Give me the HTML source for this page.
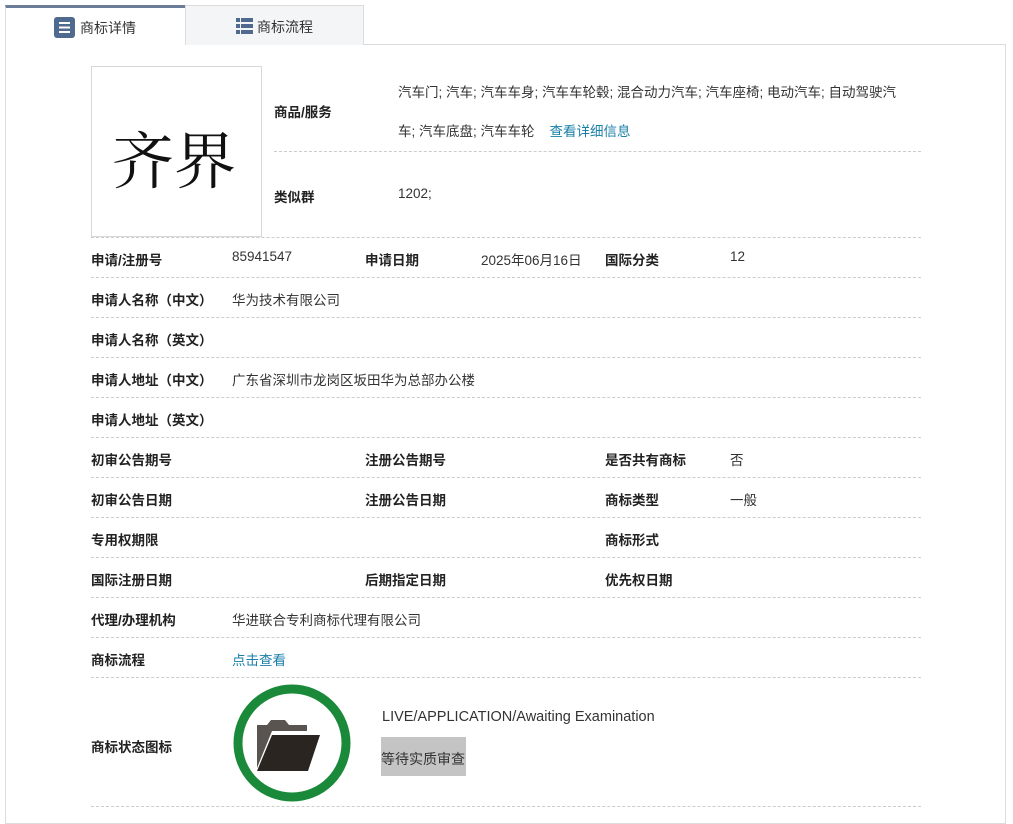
<!DOCTYPE html>
<html><head><meta charset="utf-8"><style>
*{margin:0;padding:0;box-sizing:border-box}
body{width:1013px;height:810px;background:#fff;font-family:"Liberation Sans","Noto Sans CJK SC",sans-serif;font-size:13.5px;color:#333;position:relative;overflow:hidden}
.a{position:absolute;white-space:nowrap}
.b{font-weight:bold;color:#222}
.l{position:absolute;left:91px;width:830px;border-top:1px dashed #ccc}
.lk{color:#1a7fa8}
</style></head><body>
<div class="a" style="left:5px;top:44px;width:1001px;height:780px;border:1px solid #dcdcdc"></div>
<div class="a" style="left:185px;top:5px;width:179px;height:40px;background:#f4f5f7;border:1px solid #dcdcdc;border-bottom:none"></div>
<div class="a" style="left:5px;top:5px;width:180px;height:41px;background:#fff;border-top:3px solid #6b7c99;border-left:1px solid #dcdcdc"></div>
<svg class="a" style="left:54px;top:17px" width="21" height="21"><rect width="21" height="21" rx="3" fill="#4e6a8e"/><rect x="5" y="5" width="11" height="2" fill="#fff"/><rect x="5" y="9.5" width="11" height="2" fill="#fff"/><rect x="5" y="14" width="11" height="2" fill="#fff"/></svg>
<div class="a" style="left:80px;top:18px;font-size:14px">商标详情</div>
<svg class="a" style="left:236px;top:18px" width="17" height="17"><g fill="#4e6a8e"><rect width="4" height="4"/><rect x="5" width="12" height="4"/><rect y="6" width="4" height="4"/><rect x="5" y="6" width="12" height="4"/><rect y="12" width="4" height="4"/><rect x="5" y="12" width="12" height="4"/></g></svg>
<div class="a" style="left:257px;top:17px;font-size:14px">商标流程</div>

<div class="a" style="left:91px;top:66px;width:171px;height:171px;border:1px solid #d8d8d8"></div>
<div class="a" style="left:112px;top:112px;font-family:'Noto Serif CJK SC',serif;font-size:62px;color:#111">齐界</div>
<div class="a b" style="left:274px;top:101px">商品/服务</div>
<div class="a" style="left:398px;top:81px">汽车门; 汽车; 汽车车身; 汽车车轮毂; 混合动力汽车; 汽车座椅; 电动汽车; 自动驾驶汽</div>
<div class="a" style="left:398px;top:120px">车; 汽车底盘; 汽车车轮 &nbsp;&nbsp;&nbsp;<span class="lk">查看详细信息</span></div>
<div class="a" style="left:274px;top:151px;width:647px;border-top:1px dashed #ccc"></div>
<div class="a b" style="left:274px;top:186px">类似群</div>
<div class="a" style="left:398px;top:186px">1202;</div>
<div class="l" style="top:237px"></div>

<div class="a b" style="left:91px;top:249px">申请/注册号</div><div class="a" style="left:232px;top:249px">85941547</div><div class="a b" style="left:365px;top:249px">申请日期</div><div class="a" style="left:481px;top:249px">2025年06月16日</div><div class="a b" style="left:605px;top:249px">国际分类</div><div class="a" style="left:730px;top:249px">12</div>
<div class="l" style="top:277px"></div>
<div class="a b" style="left:91px;top:289px">申请人名称（中文）</div><div class="a" style="left:232px;top:289px">华为技术有限公司</div>
<div class="l" style="top:317px"></div>
<div class="a b" style="left:91px;top:329px">申请人名称（英文）</div>
<div class="l" style="top:357px"></div>
<div class="a b" style="left:91px;top:369px">申请人地址（中文）</div><div class="a" style="left:232px;top:369px">广东省深圳市龙岗区坂田华为总部办公楼</div>
<div class="l" style="top:397px"></div>
<div class="a b" style="left:91px;top:409px">申请人地址（英文）</div>
<div class="l" style="top:437px"></div>
<div class="a b" style="left:91px;top:449px">初审公告期号</div><div class="a b" style="left:365px;top:449px">注册公告期号</div><div class="a b" style="left:605px;top:449px">是否共有商标</div><div class="a" style="left:730px;top:449px">否</div>
<div class="l" style="top:477px"></div>
<div class="a b" style="left:91px;top:489px">初审公告日期</div><div class="a b" style="left:365px;top:489px">注册公告日期</div><div class="a b" style="left:605px;top:489px">商标类型</div><div class="a" style="left:730px;top:489px">一般</div>
<div class="l" style="top:517px"></div>
<div class="a b" style="left:91px;top:529px">专用权期限</div><div class="a b" style="left:605px;top:529px">商标形式</div>
<div class="l" style="top:557px"></div>
<div class="a b" style="left:91px;top:569px">国际注册日期</div><div class="a b" style="left:365px;top:569px">后期指定日期</div><div class="a b" style="left:605px;top:569px">优先权日期</div>
<div class="l" style="top:597px"></div>
<div class="a b" style="left:91px;top:609px">代理/办理机构</div><div class="a" style="left:232px;top:609px">华进联合专利商标代理有限公司</div>
<div class="l" style="top:637px"></div>
<div class="a b" style="left:91px;top:649px">商标流程</div><div class="a lk" style="left:232px;top:649px">点击查看</div>
<div class="l" style="top:677px"></div>
<div class="a b" style="left:91px;top:736px">商标状态图标</div>
<svg class="a" style="left:232px;top:683px" width="120" height="120"><circle cx="60" cy="60" r="54" fill="#fff" stroke="#1a8a3a" stroke-width="9"/><path d="M25 85 V42 h10 l4 -5 h14 l4 5 h18 v6 H40 z" fill="#5a5450"/><path d="M25 88 L40 52 H88 L76 88 z" fill="#2b2522"/></svg>
<div class="a" style="left:382px;top:709px;font-size:14.5px">LIVE/APPLICATION/Awaiting Examination</div>
<div class="a" style="left:381px;top:737px;width:85px;height:39px;background:#c4c4c4"></div>
<div class="a" style="left:381px;top:749px;font-size:14px">等待实质审查</div>
<div class="l" style="top:806px"></div>
</body></html>
